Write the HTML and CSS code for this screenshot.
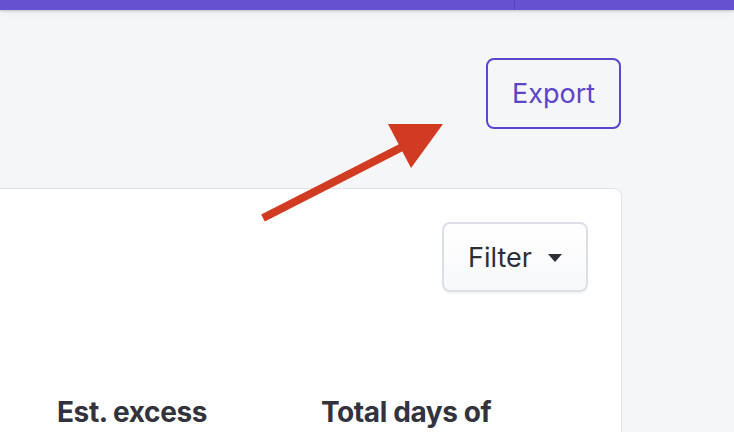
FILE: index.html
```html
<!DOCTYPE html>
<html>
<head>
<meta charset="utf-8">
<link rel="stylesheet" href="styles.css">
</head>
<body>
<header class="topbar">
  <div class="topbar-left"></div>
  <div class="topbar-right"></div>
</header>
<main class="page">
  <div class="actions">
    <button class="btn-export">Export</button>
  </div>
  <section class="card">
    <div class="card-toolbar">
      <button class="btn-filter">Filter <span class="caret"></span></button>
    </div>
    <div class="table-head">
      <div class="col col-excess">Est. excess</div>
      <div class="col col-days">Total days of</div>
    </div>
  </section>
</main>
<svg class="annotation" width="734" height="432" viewBox="0 0 734 432">
  <line x1="263" y1="218" x2="414" y2="141" stroke="#d13b22" stroke-width="8"/>
  <polygon points="388,124 443,124 411,168" fill="#d13b22"/>
</svg>
</body>
</html>
```
FILE: styles.css
```css
* { box-sizing: border-box; }
html, body { margin: 0; padding: 0; }
body {
  width: 734px;
  height: 432px;
  overflow: hidden;
  background: #f5f6f8;
  font-family: Inter, "Noto Sans", "Liberation Sans", sans-serif;
  position: relative;
}
.topbar {
  display: flex;
  height: 10px;
  background: #6652d0;
  box-shadow: 0 1px 2px rgba(0,0,0,0.18), 0 3px 6px rgba(0,0,0,0.06);
  position: relative;
  z-index: 1;
}
.topbar-left { width: 515px; border-right: 1px solid #5744bd; }
.topbar-right { flex: 1; }
.page {
  display: flex;
  flex-direction: column;
}
.actions {
  display: flex;
  justify-content: flex-end;
  padding: 48px 113px 0 0;
}
.btn-export {
  width: 135px;
  height: 71px;
  border: 2px solid #5b46cf;
  border-radius: 8px;
  background: transparent;
  color: #5a45c9;
  font-family: inherit;
  font-size: 27px;
  font-weight: 400;
  padding: 0;
}
.card {
  margin-top: 59px;
  margin-left: -20px;
  width: 642px;
  height: 246px;
  overflow: hidden;
  background: #ffffff;
  border: 1px solid #e1e3e8;
  border-bottom: none;
  border-radius: 8px 8px 0 0;
  box-shadow: 0 1px 2px rgba(0,0,0,0.04);
}
.card-toolbar {
  display: flex;
  justify-content: flex-end;
  padding: 33px 33px 0 0;
}
.btn-filter {
  width: 146px;
  height: 70px;
  display: flex;
  align-items: center;
  padding: 0 0 0 24px;
  gap: 16px;
  border: 2px solid #dcdfe6;
  border-radius: 8px;
  background: linear-gradient(#ffffff, #f7f8fa);
  box-shadow: 0 2px 1px rgba(0,0,0,0.04);
  color: #2e2e37;
  font-family: inherit;
  font-size: 27px;
  font-weight: 400;
}
.caret {
  width: 0;
  height: 0;
  border-left: 7px solid transparent;
  border-right: 7px solid transparent;
  border-top: 8px solid #2e2e37;
  margin-top: 2px;
}
.table-head {
  display: flex;
  padding: 103px 0 0 76px;
}
.col {
  font-size: 28px;
  font-weight: 700;
  color: #33333d;
  letter-spacing: -0.4px;
  white-space: nowrap;
}
.col-excess { width: 264px; }
.annotation {
  position: absolute;
  left: 0;
  top: 0;
  pointer-events: none;
}
```
